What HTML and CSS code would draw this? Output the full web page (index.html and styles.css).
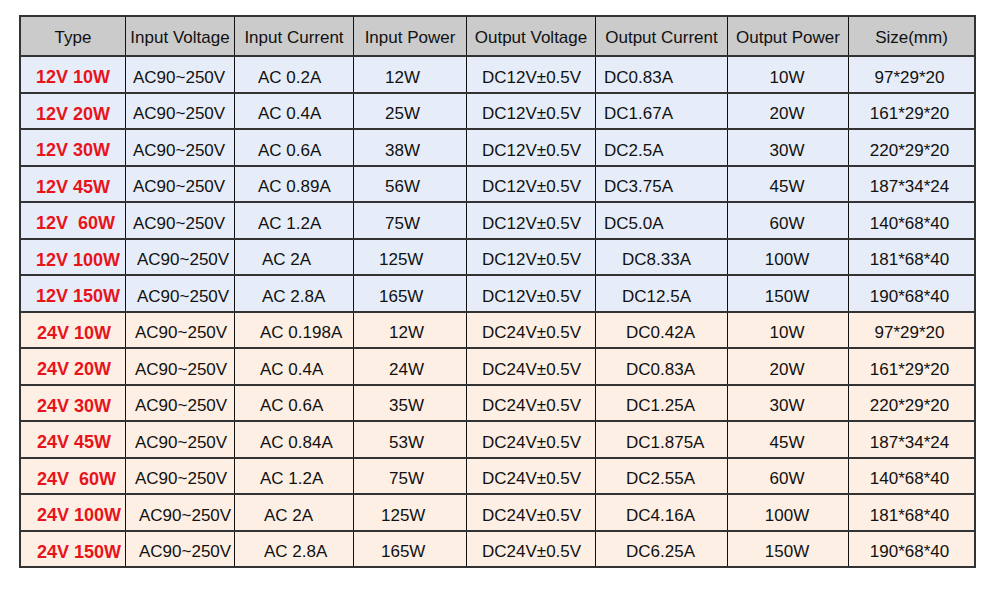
FILE: index.html
```html
<!DOCTYPE html>
<html lang="en">
<head>
<meta charset="utf-8">
<title>Power Supply Specifications</title>
<link rel="stylesheet" href="styles.css">
</head>
<body>
<div class="sheet">
  <div class="spec">
    <div class="row head">
      <div>Type</div><div>Input Voltage</div><div>Input Current</div><div>Input Power</div><div>Output Voltage</div><div>Output Current</div><div>Output Power</div><div>Size(mm)</div>
    </div>
    <div class="body">
      <div class="row g12"><div class="c-type">12V 10W</div><div class="c-iv">AC90~250V</div><div class="c-ic">AC 0.2A</div><div class="c-ip">12W</div><div class="c-ov">DC12V±0.5V</div><div class="c-oc">DC0.83A</div><div class="c-op">10W</div><div class="c-size">97*29*20</div></div>
      <div class="row g12"><div class="c-type">12V 20W</div><div class="c-iv">AC90~250V</div><div class="c-ic">AC 0.4A</div><div class="c-ip">25W</div><div class="c-ov">DC12V±0.5V</div><div class="c-oc">DC1.67A</div><div class="c-op">20W</div><div class="c-size">161*29*20</div></div>
      <div class="row g12"><div class="c-type">12V 30W</div><div class="c-iv">AC90~250V</div><div class="c-ic">AC 0.6A</div><div class="c-ip">38W</div><div class="c-ov">DC12V±0.5V</div><div class="c-oc">DC2.5A</div><div class="c-op">30W</div><div class="c-size">220*29*20</div></div>
      <div class="row g12"><div class="c-type">12V 45W</div><div class="c-iv">AC90~250V</div><div class="c-ic">AC 0.89A</div><div class="c-ip">56W</div><div class="c-ov">DC12V±0.5V</div><div class="c-oc">DC3.75A</div><div class="c-op">45W</div><div class="c-size">187*34*24</div></div>
      <div class="row g12"><div class="c-type">12V  60W</div><div class="c-iv">AC90~250V</div><div class="c-ic">AC 1.2A</div><div class="c-ip">75W</div><div class="c-ov">DC12V±0.5V</div><div class="c-oc">DC5.0A</div><div class="c-op">60W</div><div class="c-size">140*68*40</div></div>
      <div class="row g12 wide"><div class="c-type">12V 100W</div><div class="c-iv">AC90~250V</div><div class="c-ic">AC 2A</div><div class="c-ip">125W</div><div class="c-ov">DC12V±0.5V</div><div class="c-oc">DC8.33A</div><div class="c-op">100W</div><div class="c-size">181*68*40</div></div>
      <div class="row g12 wide"><div class="c-type">12V 150W</div><div class="c-iv">AC90~250V</div><div class="c-ic">AC 2.8A</div><div class="c-ip">165W</div><div class="c-ov">DC12V±0.5V</div><div class="c-oc">DC12.5A</div><div class="c-op">150W</div><div class="c-size">190*68*40</div></div>
      <div class="row g24"><div class="c-type">24V 10W</div><div class="c-iv">AC90~250V</div><div class="c-ic">AC 0.198A</div><div class="c-ip">12W</div><div class="c-ov">DC24V±0.5V</div><div class="c-oc">DC0.42A</div><div class="c-op">10W</div><div class="c-size">97*29*20</div></div>
      <div class="row g24"><div class="c-type">24V 20W</div><div class="c-iv">AC90~250V</div><div class="c-ic">AC 0.4A</div><div class="c-ip">24W</div><div class="c-ov">DC24V±0.5V</div><div class="c-oc">DC0.83A</div><div class="c-op">20W</div><div class="c-size">161*29*20</div></div>
      <div class="row g24"><div class="c-type">24V 30W</div><div class="c-iv">AC90~250V</div><div class="c-ic">AC 0.6A</div><div class="c-ip">35W</div><div class="c-ov">DC24V±0.5V</div><div class="c-oc">DC1.25A</div><div class="c-op">30W</div><div class="c-size">220*29*20</div></div>
      <div class="row g24"><div class="c-type">24V 45W</div><div class="c-iv">AC90~250V</div><div class="c-ic">AC 0.84A</div><div class="c-ip">53W</div><div class="c-ov">DC24V±0.5V</div><div class="c-oc">DC1.875A</div><div class="c-op">45W</div><div class="c-size">187*34*24</div></div>
      <div class="row g24"><div class="c-type">24V  60W</div><div class="c-iv">AC90~250V</div><div class="c-ic">AC 1.2A</div><div class="c-ip">75W</div><div class="c-ov">DC24V±0.5V</div><div class="c-oc">DC2.55A</div><div class="c-op">60W</div><div class="c-size">140*68*40</div></div>
      <div class="row g24 wide"><div class="c-type">24V 100W</div><div class="c-iv">AC90~250V</div><div class="c-ic">AC 2A</div><div class="c-ip">125W</div><div class="c-ov">DC24V±0.5V</div><div class="c-oc">DC4.16A</div><div class="c-op">100W</div><div class="c-size">181*68*40</div></div>
      <div class="row g24 wide"><div class="c-type">24V 150W</div><div class="c-iv">AC90~250V</div><div class="c-ic">AC 2.8A</div><div class="c-ip">165W</div><div class="c-ov">DC24V±0.5V</div><div class="c-oc">DC6.25A</div><div class="c-op">150W</div><div class="c-size">190*68*40</div></div>
    </div>
  </div>
</div>
</body>
</html>
```

FILE: styles.css
```css
* { box-sizing: border-box; }

body {
  margin: 0;
  background: #ffffff;
  font-family: "Liberation Sans", Arial, sans-serif;
  color: #111111;
}

.sheet {
  padding: 15px 0 0 19px;
}

.spec {
  width: 957px;
  border: 2px solid #333333;
}

.row {
  display: grid;
  grid-template-columns: 105px 109px 119px 113px 129px 132px 121px 125px;
  border-bottom: 2px solid #333333;
}

.row > div {
  display: flex;
  align-items: center;
  border-right: 1px solid #111111;
  font-size: 17px;
  white-space: pre;
  padding-top: 7px;
}

.row > div:last-child {
  border-right: 0;
}

.head {
  height: 40px;
  background: #cbcbcb;
}

.head > div {
  justify-content: center;
  padding-top: 4px;
}

.body {
  display: flex;
  flex-direction: column;
  height: 509px;
}

.body .row {
  flex: 1 1 0;
}

.body .row:last-child {
  border-bottom: 0;
}

.g12 { background: #e6edf8; }
.g24 { background: #fdefe4; }

.c-type {
  color: #e8141c;
  font-weight: bold;
  font-size: 18px;
  padding-left: 15px;
}

.row > .c-type { font-size: 18px; }

.c-op, .c-size { justify-content: center; }
.row > .c-op { padding-right: 2px; }
.row > .c-size { padding-right: 4px; }

.row > .c-type { padding-left: 15px; }
.row > .c-ov { padding-left: 15px; }

/* 12V group */
.g12 > .c-iv { padding-left: 7px; }
.g12 > .c-ic { padding-left: 23px; }
.g12 > .c-ip { padding-left: 31px; }
.g12 > .c-oc { padding-left: 8px; }

.g12.wide > .c-iv { padding-left: 11px; }
.g12.wide > .c-ic { padding-left: 27px; }
.g12.wide > .c-ip { padding-left: 25px; }
.g12.wide > .c-oc { padding-left: 26px; }

/* 24V group */
.g24 > .c-type { padding-left: 16px; }
.g24 > .c-iv { padding-left: 9px; }
.g24 > .c-ic { padding-left: 25px; }
.g24 > .c-ip { padding-left: 35px; }
.g24 > .c-oc { padding-left: 30px; }

.g24.wide > .c-iv { padding-left: 13px; }
.g24.wide > .c-ic { padding-left: 29px; }
.g24.wide > .c-ip { padding-left: 27px; }
```
